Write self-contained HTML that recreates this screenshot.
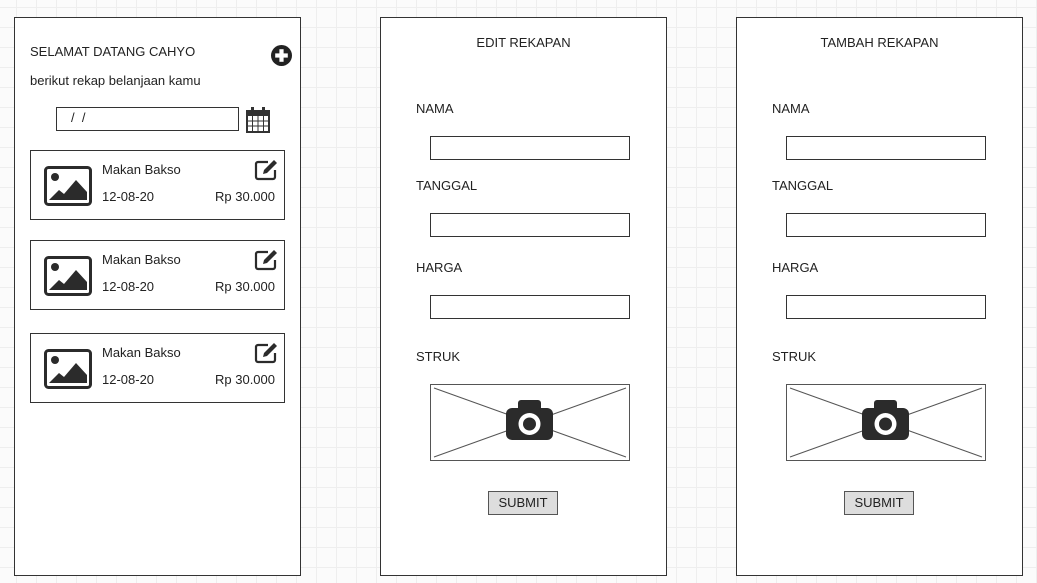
<!DOCTYPE html>
<html><head><style>
body{margin:0;width:1037px;height:583px;overflow:hidden;position:relative;font-family:"Liberation Sans",sans-serif;color:#222;
background-color:#fbfbfb;
background-image:linear-gradient(to right,#eeeeee 1px,transparent 1px),linear-gradient(to bottom,#eeeeee 1px,transparent 1px);
background-size:20px 20px;background-position:16px 7px;}
.a{position:absolute}
.panel{position:absolute;top:17px;width:285px;height:557px;border:1px solid #333;background:#fff}
.t{position:absolute;font-size:13px;white-space:nowrap}
.inp{position:absolute;width:198px;height:22px;border:1px solid #333;background:#fff}
.card{position:absolute;left:15px;width:253px;height:68px;border:1px solid #333}
.btn{position:absolute;width:68px;height:22px;border:1px solid #555;background:#ddd;font-size:13px;text-align:center;line-height:22px}
</style></head><body>

<div class="panel" style="left:14px">
  <div class="t" style="left:15px;top:26px">SELAMAT DATANG CAHYO</div>
  <svg class="a" style="left:256px;top:27px" width="21" height="21" viewBox="0 0 20 20"><circle cx="10" cy="10" r="10" fill="#222"/><rect x="8" y="4" width="4" height="12" fill="#fff"/><rect x="4" y="8" width="12" height="4" fill="#fff"/></svg>
  <div class="t" style="left:15px;top:55px">berikut rekap belanjaan kamu</div>
  <div class="a" style="left:41px;top:89px;width:181px;height:22px;border:1px solid #333"></div>
  <div class="t" style="left:56px;top:92px">/ &nbsp;/</div>
  <svg class="a" style="left:231px;top:89px" width="24" height="26" viewBox="0 0 24 26"><rect x="1" y="4" width="22" height="21" fill="none" stroke="#333" stroke-width="2"/><rect x="1" y="4" width="22" height="5" fill="#333"/><rect x="5" y="0" width="3" height="7" fill="#333"/><rect x="16" y="0" width="3" height="7" fill="#333"/><path d="M1 14H23M1 19H23M6.5 9V25M12 9V25M17.5 9V25" stroke="#333" stroke-width="1"/></svg>
  <div class="card" style="top:132px"></div>
  <div class="card" style="top:222px"></div>
  <div class="card" style="top:315px"></div>
</div>

<!-- card contents -->
<div id="cards"></div>
<script></script>

<div class="panel" style="left:380px">
  <div class="t" style="left:0;width:285px;text-align:center;top:17px">EDIT REKAPAN</div>
  <div class="t" style="left:35px;top:83px">NAMA</div>
  <div class="inp" style="left:49px;top:118px"></div>
  <div class="t" style="left:35px;top:160px">TANGGAL</div>
  <div class="inp" style="left:49px;top:195px"></div>
  <div class="t" style="left:35px;top:242px">HARGA</div>
  <div class="inp" style="left:49px;top:277px"></div>
  <div class="t" style="left:35px;top:331px">STRUK</div>
  <svg class="a" style="left:49px;top:366px" width="200" height="77"><rect x="0.5" y="0.5" width="199" height="76" fill="#fff" stroke="#555"/><path d="M4 4L196 73M196 4L4 73" stroke="#555"/><rect x="76" y="24" width="47" height="32" rx="6" fill="#2b2b2b"/><rect x="88" y="16" width="23" height="12" rx="3" fill="#2b2b2b"/><circle cx="99.5" cy="40" r="11" fill="#fff"/><circle cx="99.5" cy="40" r="6.5" fill="#2b2b2b"/></svg>
  <div class="btn" style="left:107px;top:473px">SUBMIT</div>
</div>

<div class="panel" style="left:736px">
  <div class="t" style="left:0;width:285px;text-align:center;top:17px">TAMBAH REKAPAN</div>
  <div class="t" style="left:35px;top:83px">NAMA</div>
  <div class="inp" style="left:49px;top:118px"></div>
  <div class="t" style="left:35px;top:160px">TANGGAL</div>
  <div class="inp" style="left:49px;top:195px"></div>
  <div class="t" style="left:35px;top:242px">HARGA</div>
  <div class="inp" style="left:49px;top:277px"></div>
  <div class="t" style="left:35px;top:331px">STRUK</div>
  <svg class="a" style="left:49px;top:366px" width="200" height="77"><rect x="0.5" y="0.5" width="199" height="76" fill="#fff" stroke="#555"/><path d="M4 4L196 73M196 4L4 73" stroke="#555"/><rect x="76" y="24" width="47" height="32" rx="6" fill="#2b2b2b"/><rect x="88" y="16" width="23" height="12" rx="3" fill="#2b2b2b"/><circle cx="99.5" cy="40" r="11" fill="#fff"/><circle cx="99.5" cy="40" r="6.5" fill="#2b2b2b"/></svg>
  <div class="btn" style="left:107px;top:473px">SUBMIT</div>
</div>

<!-- card 1 -->
<svg class="a" style="left:44px;top:166px" width="48" height="40" viewBox="0 0 48 40"><rect x="1.5" y="1.5" width="45" height="37" rx="3" fill="#fff" stroke="#2b2b2b" stroke-width="3"/><circle cx="11" cy="11" r="4" fill="#2b2b2b"/><path d="M5 34L15 24L20 28L32 14L43 26V34Z" fill="#2b2b2b"/></svg>
<div class="t" style="left:102px;top:162px">Makan Bakso</div>
<div class="t" style="left:102px;top:189px">12-08-20</div>
<div class="t" style="left:215px;top:189px">Rp 30.000</div>
<svg class="a" style="left:254px;top:159px" width="26" height="22" viewBox="0 0 26 22"><path d="M14 3H4a2 2 0 0 0-2 2v13a2 2 0 0 0 2 2h15a2 2 0 0 0 2-2V11" fill="none" stroke="#2b2b2b" stroke-width="2.2"/><path d="M9 15l1-4L20 1l3 3L13 14Z" fill="#2b2b2b"/></svg>
<!-- card 2 -->
<svg class="a" style="left:44px;top:256px" width="48" height="40" viewBox="0 0 48 40"><rect x="1.5" y="1.5" width="45" height="37" rx="3" fill="#fff" stroke="#2b2b2b" stroke-width="3"/><circle cx="11" cy="11" r="4" fill="#2b2b2b"/><path d="M5 34L15 24L20 28L32 14L43 26V34Z" fill="#2b2b2b"/></svg>
<div class="t" style="left:102px;top:252px">Makan Bakso</div>
<div class="t" style="left:102px;top:279px">12-08-20</div>
<div class="t" style="left:215px;top:279px">Rp 30.000</div>
<svg class="a" style="left:254px;top:249px" width="26" height="22" viewBox="0 0 26 22"><path d="M14 3H4a2 2 0 0 0-2 2v13a2 2 0 0 0 2 2h15a2 2 0 0 0 2-2V11" fill="none" stroke="#2b2b2b" stroke-width="2.2"/><path d="M9 15l1-4L20 1l3 3L13 14Z" fill="#2b2b2b"/></svg>
<!-- card 3 -->
<svg class="a" style="left:44px;top:349px" width="48" height="40" viewBox="0 0 48 40"><rect x="1.5" y="1.5" width="45" height="37" rx="3" fill="#fff" stroke="#2b2b2b" stroke-width="3"/><circle cx="11" cy="11" r="4" fill="#2b2b2b"/><path d="M5 34L15 24L20 28L32 14L43 26V34Z" fill="#2b2b2b"/></svg>
<div class="t" style="left:102px;top:345px">Makan Bakso</div>
<div class="t" style="left:102px;top:372px">12-08-20</div>
<div class="t" style="left:215px;top:372px">Rp 30.000</div>
<svg class="a" style="left:254px;top:342px" width="26" height="22" viewBox="0 0 26 22"><path d="M14 3H4a2 2 0 0 0-2 2v13a2 2 0 0 0 2 2h15a2 2 0 0 0 2-2V11" fill="none" stroke="#2b2b2b" stroke-width="2.2"/><path d="M9 15l1-4L20 1l3 3L13 14Z" fill="#2b2b2b"/></svg>
</body></html>
